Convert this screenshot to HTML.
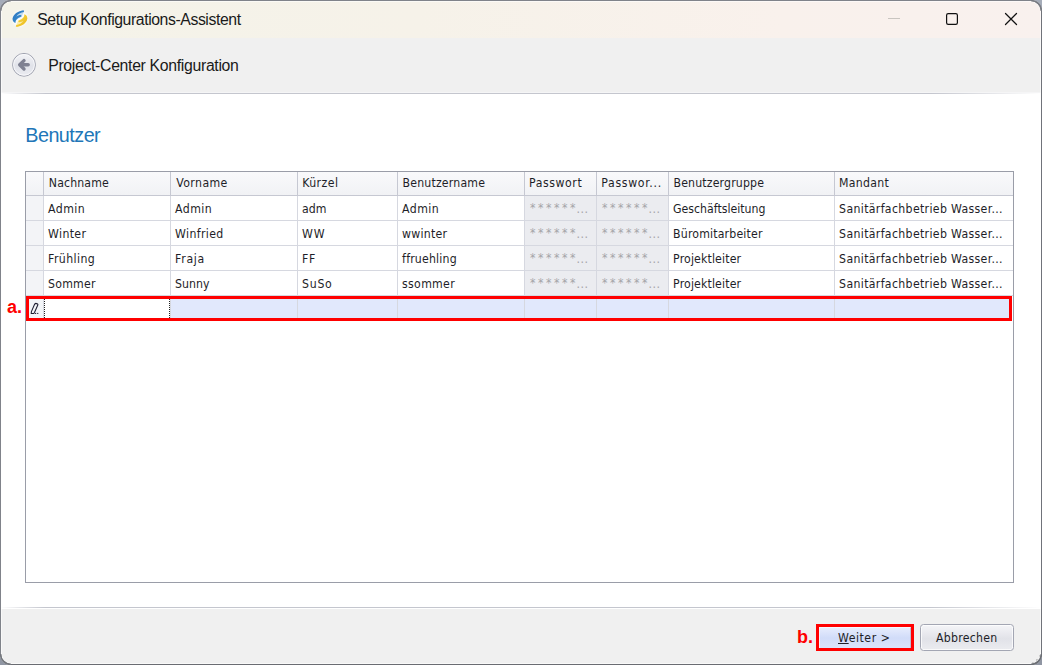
<!DOCTYPE html>
<html lang="de">
<head>
<meta charset="utf-8">
<title>Setup Konfigurations-Assistent</title>
<style>
html,body{margin:0;padding:0;}
body{width:1042px;height:665px;overflow:hidden;background:linear-gradient(#a5acb9,#9096a3);font-family:"Liberation Sans","DejaVu Sans",sans-serif;position:relative;}
#win{position:absolute;left:0;top:0;width:1042px;height:665px;border-radius:11px;overflow:hidden;background:#fff;}
#frame{position:absolute;left:0;top:0;width:1042px;height:665px;box-sizing:border-box;border:1px solid #80838a;border-right-color:#70737a;border-bottom-color:#6a6c72;border-radius:11px;box-shadow:inset 0 0 0 1px rgba(255,255,255,0.6);z-index:50;}
#titlebar{position:absolute;left:0;top:0;width:1042px;height:38px;background:linear-gradient(90deg,#f4f3e9 0%,#f6f2e9 40%,#f9f1ec 75%,#f9f1ee 100%);}
#title{position:absolute;left:37.2px;top:10px;font-size:15.8px;letter-spacing:-0.42px;line-height:20px;color:#1a1a1a;white-space:nowrap;}
#subhead{position:absolute;left:0;top:38px;width:1042px;height:55px;background:#f0f0f0;}
#subline{position:absolute;left:1px;top:92px;width:1040px;height:2px;background:linear-gradient(90deg,rgba(196,198,206,0) 0,#c4c6ce 45px,#c4c6ce 930px,rgba(196,198,206,0) 1040px) 0 1px/100% 1px no-repeat, linear-gradient(#f5f5f6,#f5f5f6) 0 0/100% 1px no-repeat;}
#subtitle{position:absolute;left:48.2px;top:55.6px;font-size:15.8px;letter-spacing:-0.32px;line-height:20px;color:#1a1a1a;white-space:nowrap;}
#h1{position:absolute;left:25.3px;top:123px;font-size:19.8px;letter-spacing:-0.54px;line-height:24px;color:#2176b8;white-space:nowrap;}
#grid{position:absolute;left:25px;top:171px;width:989px;height:412px;box-sizing:border-box;border:1px solid #9a9da8;background:#fff;}
.hl{position:absolute;height:1px;background:#d6d8e0;}
.vl{position:absolute;width:1px;background:#d6d8e0;}
.bg{position:absolute;}
.t{position:absolute;font-family:"DejaVu Sans Condensed","Liberation Sans","DejaVu Sans",sans-serif;font-size:12.2px;line-height:16px;color:#1e1e28;white-space:nowrap;}
.pwt{color:#a4a4a8;}
#footer{position:absolute;left:0;top:607px;width:1042px;height:58px;background:linear-gradient(90deg,rgba(196,198,206,0) 0,#c4c6ce 45px,#c4c6ce 930px,rgba(196,198,206,0) 1040px) 0 0/100% 1px no-repeat, linear-gradient(#ffffff,#ffffff) 0 0/100% 2px no-repeat, #f0f0f0;}
.btn{position:absolute;box-sizing:border-box;font-family:"DejaVu Sans Condensed","Liberation Sans","DejaVu Sans",sans-serif;font-size:12.2px;line-height:16px;color:#1e1e28;text-align:center;white-space:nowrap;}
.lbl{position:absolute;color:#ff0000;font-weight:bold;font-size:18px;line-height:20px;white-space:nowrap;}
.red{position:absolute;box-sizing:border-box;border:3px solid #ff0000;}
</style>
</head>
<body>
<div id="win">
<div id="titlebar"></div>
<svg style="position:absolute;left:6px;top:4px" width="30" height="30" viewBox="0 0 30 30">
<defs>
<linearGradient id="ib" x1="0" y1="0" x2="1" y2="1"><stop offset="0" stop-color="#2a74bd"/><stop offset="1" stop-color="#3c92d4"/></linearGradient>
<linearGradient id="iy" x1="0" y1="0" x2="1" y2="1"><stop offset="0" stop-color="#eab81c"/><stop offset="1" stop-color="#f8da45"/></linearGradient>
<filter id="ibl" x="-20%" y="-20%" width="140%" height="140%"><feGaussianBlur stdDeviation="0.9"/></filter>
<filter id="ibs" x="-20%" y="-20%" width="140%" height="140%"><feGaussianBlur stdDeviation="0.45"/></filter>
<path id="lf" d="M18.0 6.5 C13.6 6.5 9 8.8 7 13 C5.9 15.6 6.9 17.7 9.4 19 C9.6 16.2 11.4 14.4 15.6 12.7 C16.6 11 17 9.6 17.9 8.1 Z"/>
<path id="sw" d="M18.0 6.5 C13.6 6.5 9 8.8 7 13 C5.9 15.6 6.9 17.7 9.4 19 C9.4 16 11.2 14.2 15.4 12.5 C15.6 11.8 15.3 11.3 14.9 11.1 C13 11.1 11.4 11.6 10.2 12.7 C11.9 9.9 14.9 8.5 17.9 8.1 Z"/>
</defs>
<ellipse cx="13.95" cy="14.65" rx="7.4" ry="8.2" fill="#ffffff" opacity="0.75" filter="url(#ibl)" transform="rotate(35 13.95 14.65)"/>
<g filter="url(#ibs)">
<use href="#lf" fill="#8fc0e6" opacity="0.55"/>
<use href="#lf" fill="#f6e27a" opacity="0.6" transform="rotate(180 13.95 14.65)"/>
<use href="#sw" fill="url(#ib)"/>
<use href="#sw" fill="url(#iy)" transform="rotate(180 13.95 14.65)"/>
</g>
</svg>
<div id="title">Setup Konfigurations-Assistent</div>
<svg style="position:absolute;left:880px;top:8px" width="150" height="22" viewBox="0 0 150 22">
<path d="M8 10.5 H20" stroke="#c9c5c0" stroke-width="1" fill="none"/>
<rect x="66.6" y="5.6" width="10.8" height="10.8" rx="1.6" ry="1.6" stroke="#111" stroke-width="1.2" fill="none"/>
<path d="M125.5 5.5 L136.5 16.5 M136.5 5.5 L125.5 16.5" stroke="#111" stroke-width="1.25" fill="none" stroke-linecap="round"/>
</svg>
<div id="subhead"></div><div id="subline"></div>
<svg style="position:absolute;left:11px;top:52px" width="26" height="26" viewBox="0 0 26 26">
<defs><linearGradient id="bk" x1="0" y1="0" x2="0" y2="1"><stop offset="0" stop-color="#f3f4f7"/><stop offset="0.55" stop-color="#e0e2e9"/><stop offset="1" stop-color="#ebecf1"/></linearGradient></defs>
<circle cx="13" cy="12.8" r="11.4" fill="url(#bk)" stroke="#9fa2af" stroke-width="1"/>
<circle cx="13" cy="12.8" r="10.4" fill="none" stroke="#fafafc" stroke-width="1" opacity="0.9"/>
<path d="M13.0 8.6 L8.7 12.8 L13.0 17.0" fill="none" stroke="#7f8192" stroke-width="3.4" stroke-linecap="round" stroke-linejoin="round"/>
<path d="M9.5 12.8 H17.1" fill="none" stroke="#7f8192" stroke-width="3.6" stroke-linecap="round"/>
</svg>
<div id="subtitle">Project-Center Konfiguration</div>
<div id="h1">Benutzer</div>
<div id="grid"></div>
<div class="bg" style="left:26px;top:172px;width:987px;height:23px;background:linear-gradient(#f9f9fb,#f1f2f5)"></div>
<div class="bg" style="left:26px;top:196px;width:17px;height:99px;background:#f3f4f7"></div>
<div class="bg" style="left:525px;top:196px;width:143px;height:99px;background:#ebecf0"></div>
<div class="bg" style="left:171px;top:299px;width:838px;height:19px;background:#e1e8fc"></div>
<div class="bg" style="left:29px;top:299px;width:15px;height:19px;background:#f3f5f8"></div>
<div class="hl" style="left:26px;top:195px;width:987px;background:#c6c8d2"></div>
<div class="hl" style="left:26px;top:220px;width:987px"></div>
<div class="hl" style="left:26px;top:245px;width:987px"></div>
<div class="hl" style="left:26px;top:270px;width:987px"></div>
<div class="hl" style="left:26px;top:295px;width:987px"></div>
<div class="vl" style="left:43px;top:172px;height:23px;background:#c6c8d2"></div>
<div class="vl" style="left:43px;top:196px;height:124px"></div>
<div class="vl" style="left:170px;top:172px;height:23px;background:#c6c8d2"></div>
<div class="vl" style="left:170px;top:196px;height:124px"></div>
<div class="vl" style="left:297px;top:172px;height:23px;background:#c6c8d2"></div>
<div class="vl" style="left:297px;top:196px;height:124px"></div>
<div class="vl" style="left:397px;top:172px;height:23px;background:#c6c8d2"></div>
<div class="vl" style="left:397px;top:196px;height:124px"></div>
<div class="vl" style="left:524px;top:172px;height:23px;background:#c6c8d2"></div>
<div class="vl" style="left:524px;top:196px;height:124px"></div>
<div class="vl" style="left:596px;top:172px;height:23px;background:#c6c8d2"></div>
<div class="vl" style="left:596px;top:196px;height:124px"></div>
<div class="vl" style="left:668px;top:172px;height:23px;background:#c6c8d2"></div>
<div class="vl" style="left:668px;top:196px;height:124px"></div>
<div class="vl" style="left:834px;top:172px;height:23px;background:#c6c8d2"></div>
<div class="vl" style="left:834px;top:196px;height:124px"></div>
<div class="t" style="left:48.8px;top:175px;letter-spacing:0.14px;">Nachname</div>
<div class="t" style="left:176.3px;top:175px;letter-spacing:0.4px;">Vorname</div>
<div class="t" style="left:302.2px;top:175px;letter-spacing:0.44px;">Kürzel</div>
<div class="t" style="left:402.5px;top:175px;letter-spacing:0.19px;">Benutzername</div>
<div class="t" style="left:529.0px;top:175px;letter-spacing:0.57px;">Passwort</div>
<div class="t" style="left:601.3px;top:175px;letter-spacing:0.68px;">Passwor...</div>
<div class="t" style="left:673.5px;top:175px;letter-spacing:0.16px;">Benutzergruppe</div>
<div class="t" style="left:839.1px;top:175px;letter-spacing:0.28px;">Mandant</div>
<div class="t" style="left:48.1px;top:201px;letter-spacing:0.4px;">Admin</div>
<div class="t" style="left:175.1px;top:201px;letter-spacing:0.4px;">Admin</div>
<div class="t" style="left:302.1px;top:201px;letter-spacing:-0.05px;">adm</div>
<div class="t" style="left:402.1px;top:201px;letter-spacing:0.4px;">Admin</div>
<div class="t pwt" style="left:530.1px;top:201px"><span style="letter-spacing:2.5px;position:relative;top:-1.5px">******</span><span style="letter-spacing:0.5px;margin-left:-1.5px">...</span></div>
<div class="t pwt" style="left:602.1px;top:201px"><span style="letter-spacing:2.5px;position:relative;top:-1.5px">******</span><span style="letter-spacing:0.5px;margin-left:-1.5px">...</span></div>
<div class="t" style="left:673.1px;top:201px;">Geschäftsleitung</div>
<div class="t" style="left:839.1px;top:201px;letter-spacing:0.34px;">Sanitärfachbetrieb Wasser...</div>
<div class="t" style="left:48.1px;top:226px;letter-spacing:0.34px;">Winter</div>
<div class="t" style="left:175.1px;top:226px;letter-spacing:0.36px;">Winfried</div>
<div class="t" style="left:302.1px;top:226px;letter-spacing:0.7px;">WW</div>
<div class="t" style="left:402.1px;top:226px;letter-spacing:0.23px;">wwinter</div>
<div class="t pwt" style="left:530.1px;top:226px"><span style="letter-spacing:2.5px;position:relative;top:-1.5px">******</span><span style="letter-spacing:0.5px;margin-left:-1.5px">...</span></div>
<div class="t pwt" style="left:602.1px;top:226px"><span style="letter-spacing:2.5px;position:relative;top:-1.5px">******</span><span style="letter-spacing:0.5px;margin-left:-1.5px">...</span></div>
<div class="t" style="left:673.1px;top:226px;letter-spacing:0.17px;">Büromitarbeiter</div>
<div class="t" style="left:839.1px;top:226px;letter-spacing:0.34px;">Sanitärfachbetrieb Wasser...</div>
<div class="t" style="left:48.1px;top:251px;letter-spacing:0.4px;">Frühling</div>
<div class="t" style="left:175.1px;top:251px;letter-spacing:0.7px;">Fraja</div>
<div class="t" style="left:302.1px;top:251px;letter-spacing:0.7px;">FF</div>
<div class="t" style="left:402.1px;top:251px;letter-spacing:0.18px;">ffruehling</div>
<div class="t pwt" style="left:530.1px;top:251px"><span style="letter-spacing:2.5px;position:relative;top:-1.5px">******</span><span style="letter-spacing:0.5px;margin-left:-1.5px">...</span></div>
<div class="t pwt" style="left:602.1px;top:251px"><span style="letter-spacing:2.5px;position:relative;top:-1.5px">******</span><span style="letter-spacing:0.5px;margin-left:-1.5px">...</span></div>
<div class="t" style="left:673.1px;top:251px;letter-spacing:0.15px;">Projektleiter</div>
<div class="t" style="left:839.1px;top:251px;letter-spacing:0.34px;">Sanitärfachbetrieb Wasser...</div>
<div class="t" style="left:48.1px;top:276px;letter-spacing:0.22px;">Sommer</div>
<div class="t" style="left:175.1px;top:276px;letter-spacing:0.05px;">Sunny</div>
<div class="t" style="left:302.1px;top:276px;letter-spacing:0.7px;">SuSo</div>
<div class="t" style="left:402.1px;top:276px;letter-spacing:0.3px;">ssommer</div>
<div class="t pwt" style="left:530.1px;top:276px"><span style="letter-spacing:2.5px;position:relative;top:-1.5px">******</span><span style="letter-spacing:0.5px;margin-left:-1.5px">...</span></div>
<div class="t pwt" style="left:602.1px;top:276px"><span style="letter-spacing:2.5px;position:relative;top:-1.5px">******</span><span style="letter-spacing:0.5px;margin-left:-1.5px">...</span></div>
<div class="t" style="left:673.1px;top:276px;letter-spacing:0.15px;">Projektleiter</div>
<div class="t" style="left:839.1px;top:276px;letter-spacing:0.34px;">Sanitärfachbetrieb Wasser...</div>
<div style="position:absolute;left:44px;top:299px;width:126px;height:19px;box-sizing:border-box;border-left:1px dotted #222;border-right:1px dotted #222;background:#fff"></div>
<svg style="position:absolute;left:30px;top:302px" width="10" height="14" viewBox="0 0 10 14">
<path d="M1.4 9.6 L4.6 2.3 Q5.2 1.3 6.3 1.4 L7.1 1.7 Q8.2 2.1 7.8 3 L4.6 10.3 L3.9 11.5 L1.2 11.5 Z" fill="none" stroke="#1c1c30" stroke-width="1.05" stroke-linejoin="round"/>
<rect x="5.1" y="10.9" width="1.1" height="1.1" fill="#1c1c30"/>
<rect x="7.2" y="10.9" width="1.1" height="1.1" fill="#1c1c30"/>
</svg>
<div class="red" style="left:26px;top:296px;width:986px;height:25px"></div>
<div class="lbl" style="left:7px;top:297px">a.</div>
<div id="footer"></div>
<div class="bg" style="left:819px;top:627px;width:92px;height:21px;box-sizing:border-box;border-top:1px solid #f6f8fe;border-left:1px solid #f0f4fe;border-right:1px solid #b9bfd2;background:linear-gradient(#e6ecfd,#d1dcf9 50%,#dbe4fb)"></div>
<div class="t" style="left:838.0px;top:630px;letter-spacing:0.53px;"><u>W</u>eiter &gt;</div>
<div class="red" style="left:816px;top:624px;width:98px;height:27px"></div>
<div class="lbl" style="left:797px;top:627px">b.</div>
<div class="bg" style="left:920px;top:624px;width:94px;height:27px;box-sizing:border-box;border:1px solid #a3a6b3;border-radius:3.5px;box-shadow:inset 0 0 0 1px rgba(255,255,255,0.75);background:linear-gradient(#f5f5f8,#e1e2e8 55%,#ebecf0)"></div>
<div class="t" style="left:936.0px;top:630px;letter-spacing:0.25px;">Abbrechen</div>
<div class="bg" style="left:1039px;top:655px;width:2px;height:6px;background:#c2c2c2"></div>
<div class="bg" style="left:1036px;top:659px;width:3px;height:3px;background:#c6c6c6"></div>
<div class="bg" style="left:1032px;top:662px;width:6px;height:2px;background:#c2c2c2"></div>
</div>
<div id="frame"></div>
<svg style="position:absolute;left:0;top:0;z-index:60" width="1042" height="665" viewBox="0 0 1042 665" fill="none" stroke-width="1.5">
<path d="M0.6 11 A10.4 10.4 0 0 1 11 0.6" stroke="#80838a"/>
<path d="M1031 0.6 A10.4 10.4 0 0 1 1041.4 11" stroke="#797c83"/>
<path d="M1041.4 654 A10.4 10.4 0 0 1 1031 664.4" stroke="#6c6f75"/>
<path d="M11 664.4 A10.4 10.4 0 0 1 0.6 654" stroke="#74777d"/>
</svg>
</body>
</html>
